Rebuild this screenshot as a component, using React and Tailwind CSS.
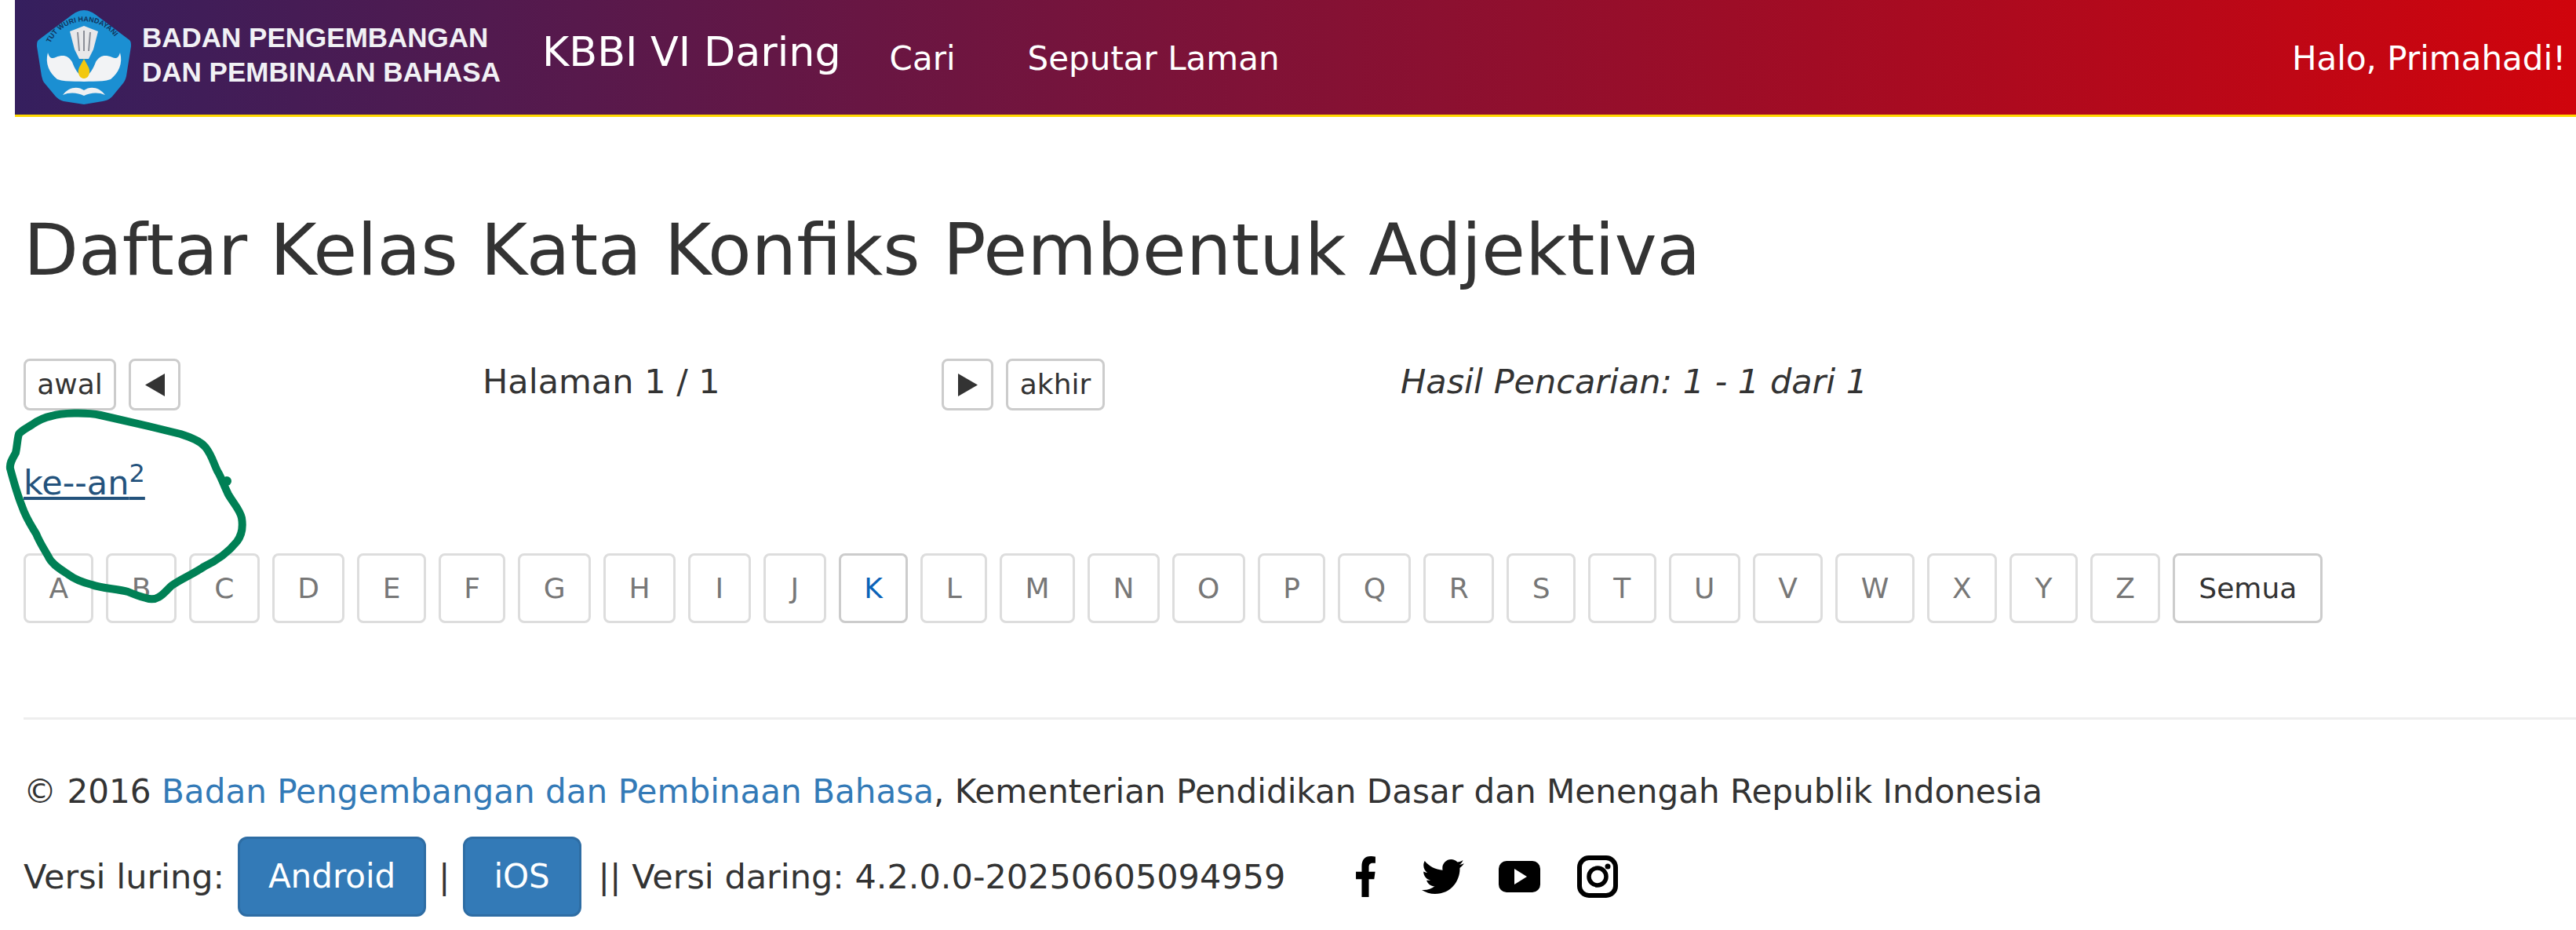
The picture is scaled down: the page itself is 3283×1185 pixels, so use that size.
import { FaFacebookF, FaTwitter } from 'react-icons/fa';

const letters = 'ABCDEFGHIJKLMNOPQRSTUVWXYZ'.split('');

function Logo() {
  return (
    <svg viewBox="0 0 120 120" className="w-[120px] h-[120px] shrink-0">
      <path d="M60 0 C66 0 72 3 78 8 L118 38 C120 40 120 42 120 46 L114 84 C113 88 112 90 110 93 L96 110 C93 113 90 115 84 116 L60 120 L34 116 C30 115 27 113 24 110 L9 92 C7 89 7 87 6 84 L0 46 C0 42 0 40 2 38 L42 8 C48 3 54 0 60 0 Z" fill="#1b8fd2" />
      <path id="logoArc" d="M17 42 A48 48 0 0 1 104 42" fill="none" />
      <text fontSize="9" fontWeight="700" fill="#10345c" fontFamily="'Liberation Sans', sans-serif">
        <textPath href="#logoArc">TUT WURI HANDAYANI</textPath>
      </text>
      <path d="M42 27 L60 20 L78 27 L72 50 L66 62 L54 62 L48 50 Z" fill="#e8e8ea" />
      <path d="M52 28 L54 52 M60 26 L60 52 M68 28 L66 52" stroke="#8b8f98" strokeWidth="2" />
      <path d="M14 54 C16 62 20 62 24 60 C34 56 40 58 45 66 C48 74 52 82 60 86 C68 82 72 74 75 66 C80 58 86 56 96 60 C100 62 104 62 106 54 C110 68 104 80 94 88 C84 92 72 90 60 91 C48 90 36 92 26 88 C16 80 10 68 14 54 Z" fill="#f2f3f5" />
      <path d="M60 62 C64 70 68 74 67 80 C66 85 63 87 60 87 C57 87 54 85 53 80 C52 74 56 70 60 62 Z" fill="#f2c80f" />
      <path d="M33 108 C40 98 52 96 60 102 C68 96 80 98 87 108 C78 104 68 105 60 109 C52 105 42 104 33 108 Z" fill="#eef0f2" />
    </svg>
  );
}

function Scribble() {
  return (
    <svg className="absolute left-0 top-[520px] pointer-events-none" width="320" height="252" viewBox="0 520 320 252" fill="none">
      <path
        d="M66 530 C78 526 110 525 128 529 L189 543 L230 553 C245 558 255 562 262 570 C270 580 272 590 277 600 C283 610 285 618 291 630 C298 642 306 650 308 660 C310 672 308 682 302 690 C290 705 275 715 260 722 C245 732 230 738 219 746 C212 752 208 758 202 761 C197 764 192 764 186 762 C178 760 170 757 163 754 C150 750 130 750 117 745 C105 742 95 738 87 732 C75 724 65 718 61 708 C55 698 50 690 46 680 C40 670 33 660 28 645 C22 630 17 612 13 597 C12 590 16 584 20 577 C22 568 22 560 24 553 C28 548 35 545 41 541 C48 536 56 532 66 530 Z"
        stroke="#008055"
        strokeWidth="10"
        strokeLinejoin="round"
      />
      <circle cx="289" cy="613" r="6" fill="#008055" />
    </svg>
  );
}

function Triangle({ flip }) {
  return (
    <svg viewBox="0 0 25 29" className="w-[25px] h-[29px] mx-auto">
      <path d={flip ? 'M0 0 L25 14.5 L0 29 Z' : 'M25 0 L0 14.5 L25 29 Z'} fill="#333" />
    </svg>
  );
}

export default function App() {
  return (
    <div className="relative w-[3283px] h-[1185px] overflow-hidden bg-white font-['DejaVu_Sans',sans-serif] text-[43px] leading-[56px] text-[#333]">
      {/* Navbar */}
      <nav className="ml-[19px] h-[149px] border-b-[3px] border-[#ffd700] bg-linear-to-r/srgb from-[#351f5e] to-[#d0040c] flex items-center pl-[28px] pr-[13px] text-[42px] text-white">
        <Logo />
        <div className="ml-[14px] mb-[6px] font-['Liberation_Sans',sans-serif] font-bold text-[35px] leading-[44px] w-[510px] text-[#f1f1f5]">
          <div>BADAN PENGEMBANGAN</div>
          <div>DAN PEMBINAAN BAHASA</div>
        </div>
        <span className="text-[52.3px] mb-[14px]">KBBI VI Daring</span>
        <span className="ml-[62px] mt-[4px]">Cari</span>
        <span className="ml-[92px] mt-[4px]">Seputar Laman</span>
        <span className="ml-auto mt-[4px]">Halo, Primahadi!</span>
      </nav>

      <main className="pl-[30px]">
        <h1 className="mt-[116px] text-[91px] leading-[108px] font-normal">Daftar Kelas Kata Konfiks Pembentuk Adjektiva</h1>

        {/* Pagination */}
        <div className="mt-[84px] grid grid-cols-[repeat(4,585px)] h-[66px]">
          <div className="flex gap-[16px]">
            <button className="h-[66px] w-[118px] border-[3px] border-[#ccc] rounded-[8px] text-[#333] text-[36px] leading-none">awal</button>
            <button className="h-[66px] w-[66px] border-[3px] border-[#ccc] rounded-[8px]"><Triangle /></button>
          </div>
          <div className="leading-[58px]">Halaman 1 / 1</div>
          <div className="flex gap-[16px]">
            <button className="h-[66px] w-[66px] border-[3px] border-[#ccc] rounded-[8px]"><Triangle flip /></button>
            <button className="h-[66px] w-[126px] border-[3px] border-[#ccc] rounded-[8px] text-[#333] text-[36px] leading-none">akhir</button>
          </div>
          <div className="italic leading-[58px] whitespace-nowrap">Hasil Pencarian: 1 - 1 dari 1</div>
        </div>

        <div className="mt-[64px] h-[56px]">
          <a href="#" className="text-[#23527c] underline">ke--an<sup className="text-[32px]">2</sup></a>
        </div>

        {/* Alphabet */}
        <div className="mt-[62px] flex gap-[16px] text-[36px]">
          {letters.map((l) => (
            <button
              key={l}
              className={
                l === 'K'
                  ? 'h-[89px] min-w-[80px] px-[29.4px] border-[3px] border-[#ccc] rounded-[8px] text-[#0c63b8] leading-none'
                  : 'h-[89px] min-w-[80px] px-[29.4px] border-[3px] border-[#ddd] rounded-[8px] text-[#777] leading-none'
              }
            >
              {l}
            </button>
          ))}
          <button className="h-[89px] px-[30px] border-[3px] border-[#ccc] rounded-[8px] text-[#333] leading-none">Semua</button>
        </div>

        <hr className="mt-[120px] border-t-[3px] border-[#eee]" />

        {/* Footer */}
        <p className="mt-[64px] text-[42.1px] leading-[56px]">
          © 2016 <a href="#" className="text-[#337ab7]">Badan Pengembangan dan Pembinaan Bahasa</a>, Kementerian Pendidikan Dasar dan Menengah Republik Indonesia
        </p>
        <div className="mt-[29px] flex items-center h-[102px]">
          <span>Versi luring:</span>
          <button className="ml-[17px] h-[102px] w-[240px] rounded-[12px] border-[3px] border-[#2e6da4] bg-[#337ab7] text-white text-[42px] leading-none">Android</button>
          <span className="mx-[16px]">|</span>
          <button className="h-[102px] w-[151px] rounded-[12px] border-[3px] border-[#2e6da4] bg-[#337ab7] text-white text-[42px] leading-none">iOS</button>
          <span className="ml-[22px]">|| Versi daring: 4.2.0.0-20250605094959</span>
          <div className="ml-[88px] flex items-center text-black">
            <FaFacebookF preserveAspectRatio="none" className="w-[29px] h-[52px]" />
            <FaTwitter className="ml-[57px] w-[54px] h-[54px]" />
            <svg viewBox="0 0 53 40" className="ml-[44px] w-[53px] h-[40px]">
              <rect width="53" height="40" rx="10" fill="#000" />
              <path d="M20 10 L36 20 L20 30 Z" fill="#fff" />
            </svg>
            <svg viewBox="0 0 52 54" className="ml-[47px] w-[52px] h-[54px]" fill="none" stroke="#000">
              <rect x="3" y="3" width="46" height="48" rx="12" strokeWidth="6" />
              <circle cx="26" cy="27" r="11" strokeWidth="5.5" />
              <circle cx="39" cy="14" r="3.5" fill="#000" stroke="none" />
            </svg>
          </div>
        </div>
      </main>

      <Scribble />
    </div>
  );
}
